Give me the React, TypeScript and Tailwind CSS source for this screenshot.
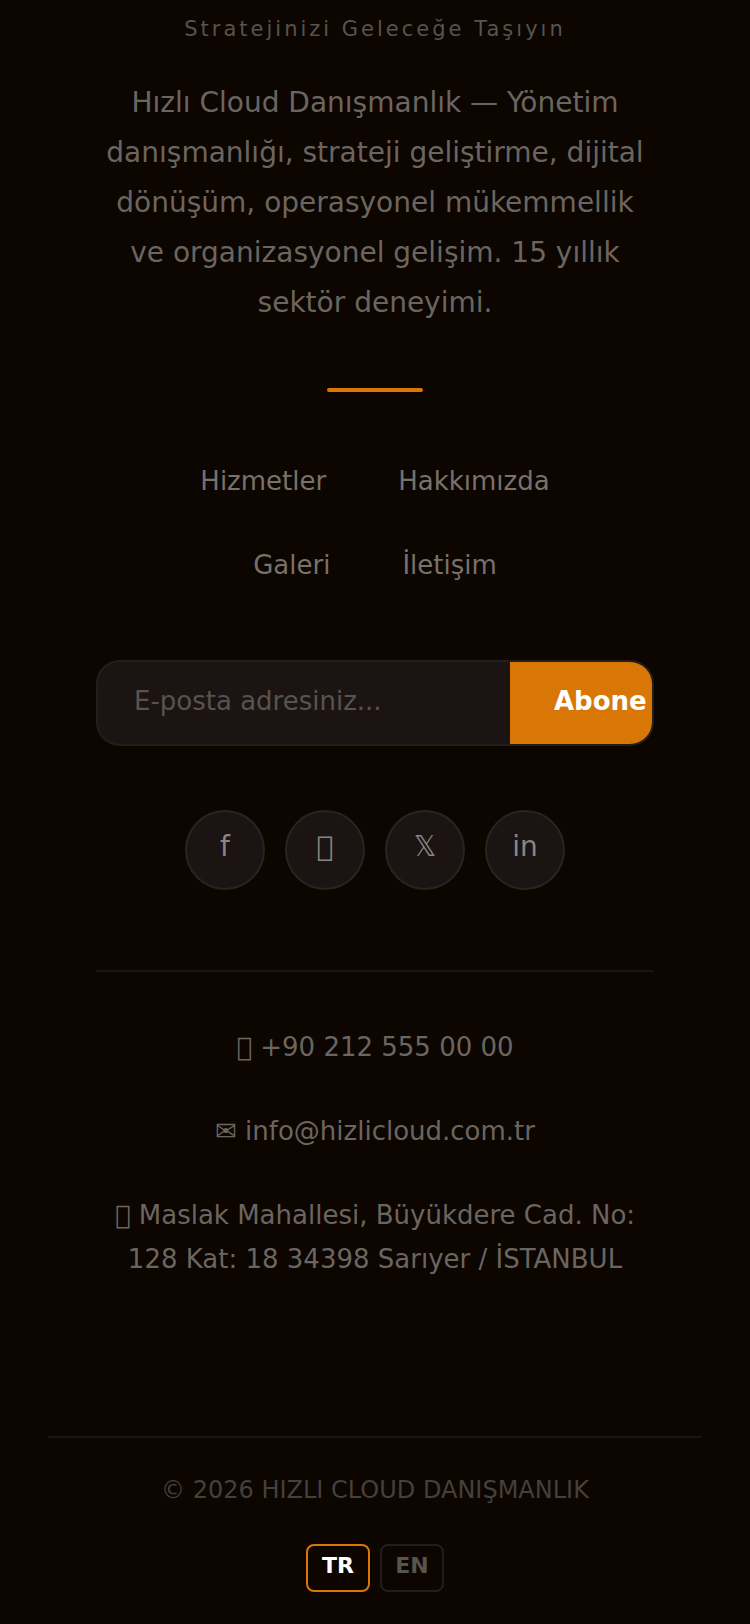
import { useState } from 'react';
import type { FormEvent } from 'react';

const links = [
  { label: 'Hizmetler', href: '#hizmetler' },
  { label: 'Hakkımızda', href: '#hakkimizda' },
  { label: 'Galeri', href: '#galeri' },
  { label: 'İletişim', href: '#iletisim' },
];

// Private use code point, drawn as the empty glyph box
const GLYPH = '\u{10FFFD}';

const socials = [
  { icon: 'f', label: 'Facebook' },
  { icon: GLYPH, label: 'Instagram' },
  { icon: '𝕏', label: 'X' },
  { icon: 'in', label: 'LinkedIn' },
];

const languages = ['TR', 'EN'];

function Newsletter() {
  const [email, setEmail] = useState('');

  const handleSubmit = (e: FormEvent) => {
    e.preventDefault();
    setEmail('');
  };

  return (
    <form
      onSubmit={handleSubmit}
      className="mt-[73px] flex h-[86px] w-full overflow-hidden rounded-3xl border-2 border-[#231e1b] bg-[#1c1412]"
    >
      <input
        type="email"
        aria-label="E-posta adresiniz"
        value={email}
        onChange={(e) => setEmail(e.target.value)}
        placeholder="E-posta adresiniz..."
        className="min-w-0 flex-1 bg-transparent px-9 pb-1 text-[26px] text-white outline-none placeholder:text-[#57534e]"
      />
      <button
        type="submit"
        className="w-[142px] shrink-0 bg-[#d97706] pb-1 pl-11 text-left text-[26px] font-bold text-white"
      >
        Abone
      </button>
    </form>
  );
}

export default function App() {
  const [lang, setLang] = useState('TR');

  return (
    <footer className="min-h-screen bg-[#0c0500] px-12 pt-3 pb-8 text-center font-['DejaVu_Sans',sans-serif] text-[#6b6561]">
      <div className="flex flex-col items-center px-12">
        <p className="text-[21px] leading-[34px] tracking-[3px] text-[#57534e]">Stratejinizi Geleceğe Taşıyın</p>

        <p className="mt-8 text-[28px] leading-[50px]">
          Hızlı Cloud Danışmanlık — Yönetim danışmanlığı, strateji geliştirme, dijital dönüşüm, operasyonel
          mükemmellik ve organizasyonel gelişim. 15 yıllık sektör deneyimi.
        </p>

        <div className="mt-[60px] h-1 w-24 rounded-sm bg-[#d97706]" />

        <nav className="mt-[67px] flex max-w-[480px] flex-wrap justify-center gap-x-[72px] gap-y-10 text-[26px] leading-[44px] text-[#78716c]">
          {links.map((link) => (
            <a key={link.href} href={link.href}>
              {link.label}
            </a>
          ))}
        </nav>

        <Newsletter />

        <div className="mt-16 flex gap-5">
          {socials.map((social) => (
            <a
              key={social.label}
              href="#"
              aria-label={social.label}
              className="flex size-20 items-center justify-center rounded-full border-2 border-[#292421] bg-[#1c1412] pb-1.5 text-[28px] text-[#8a8581]"
            >
              {social.icon}
            </a>
          ))}
        </div>

        <address className="mt-20 flex w-full flex-col gap-10 border-t-2 border-[#1c1412] pt-[53px] text-[26px] leading-[44px] not-italic">
          <p>{GLYPH} +90 212 555 00 00</p>
          <p>✉ info@hizlicloud.com.tr</p>
          <p>{GLYPH} Maslak Mahallesi, Büyükdere Cad. No: 128 Kat: 18 34398 Sarıyer / İSTANBUL</p>
        </address>
      </div>

      <div className="mt-[155px] border-t-2 border-[#1c1412] pt-8">
        <p className="text-2xl leading-10 text-[#44403c]">© 2026 HIZLI CLOUD DANIŞMANLIK</p>
        <div className="mt-[34px] flex justify-center gap-[10px]">
          {languages.map((code) => (
            <button
              key={code}
              type="button"
              onClick={() => setLang(code)}
              className={`h-12 w-16 rounded-lg border-2 pb-1 text-[22px] leading-7 font-bold ${
                lang === code ? 'border-[#d97706] text-white' : 'border-[#231e1b] text-[#57534e]'
              }`}
            >
              {code}
            </button>
          ))}
        </div>
      </div>
    </footer>
  );
}
